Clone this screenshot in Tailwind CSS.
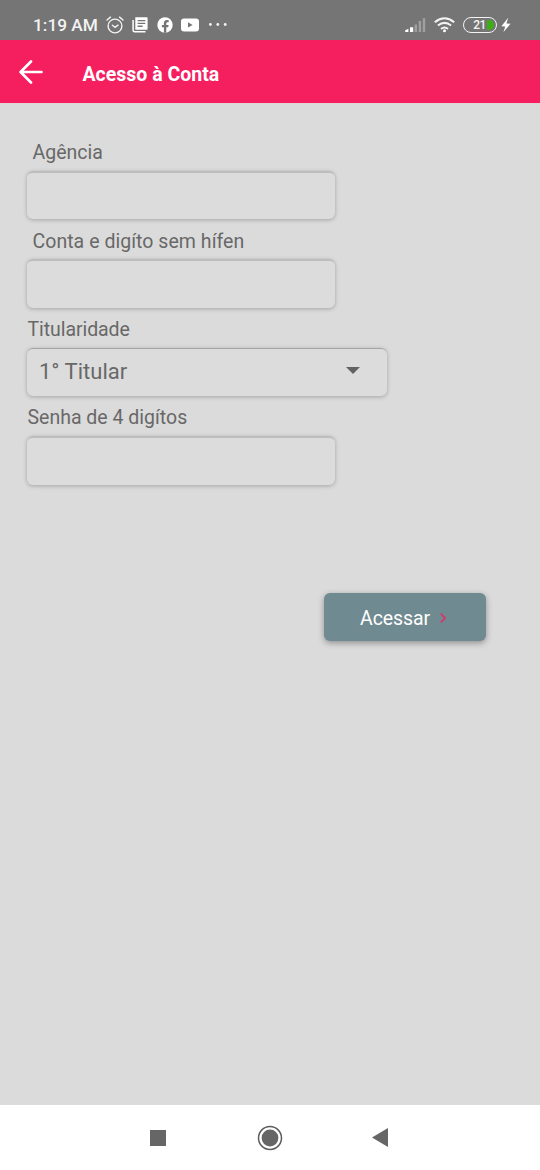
<!DOCTYPE html>
<html lang="pt-BR">
<head>
<meta charset="utf-8">
<meta name="viewport" content="width=device-width, initial-scale=1">
<title>Acesso à Conta</title>
<script src="https://cdn.jsdelivr.net/npm/@tailwindcss/browser@4"></script>
</head>
<body class="w-[540px] h-[1170px] overflow-hidden flex flex-col bg-[#dbdbdb] font-['Roboto',sans-serif] text-[#686868]">
  <div class="h-10 shrink-0 bg-[#757575] flex items-center pl-[33px] pr-[29px] pt-[9px] text-[#f3f3f3]">
    <span class="w-[73px] pt-px text-[17.3px] leading-[31px] font-medium whitespace-nowrap">1:19 AM</span>
    <svg class="w-[18px] h-[18px]" viewBox="0 0 18 18" fill="none" stroke="currentColor" stroke-width="1.4" stroke-linecap="round"><circle cx="9" cy="10" r="6.9"/><path d="M1 4 4.4 1.1M17 4l-3.4-2.9M6.4 9.3 9 11.3l3-2.2"/></svg>
    <svg class="w-4 h-4 ml-2" viewBox="0 0 16 16"><path fill="#fff" fill-rule="evenodd" d="M3.3.2H14.6q1 0 1 1V11.700q0 1-1 1H3.300zM5.600 3v1.300h7.700V3zM5.600 5.800v1.300h7.700V5.800zM5.600 8.600v1.300h5V8.600z"/><path d="M1.100 3v10.200q0 1.600 1.600 1.600H13.500" fill="none" stroke="#fff" stroke-width="1.500"/></svg>
    <svg class="w-4 h-4 ml-[9px]" viewBox="0 0 16 16"><circle cx="8" cy="8" r="7.700" fill="#fff"/><path fill="#757575" d="M6.900 15.800V10.200H4.900V7.900h2V6.200c0-2 1.200-3.100 3-3.100.9 0 1.800.2 1.800.2v1.900h-1c-1 0-1.400.6-1.400 1.300v1.400h2.300l-.4 2.300H9.300v5.600z"/></svg>
    <svg class="w-[18px] h-[14px] ml-2" viewBox="0 0 18 14"><rect y=".5" width="18" height="13" rx="3" fill="#fff"/><path d="M7 4.300v5.200L11.600 7z" fill="#757575"/></svg>
    <svg class="w-[18px] h-4 ml-[10px]" viewBox="0 0 18 16" fill="currentColor"><circle cx="1.400" cy="7.500" r="1.400"/><circle cx="8.800" cy="7.500" r="1.400"/><circle cx="16.200" cy="7.500" r="1.400"/></svg>
    <svg class="w-[21px] h-4 ml-auto" viewBox="0 0 21 16"><path fill="#fff" d="M.2 13.200 3.400 11.800V15H.2zM5 10.200h3.200V15H5z"/><path fill="#a0a0a0" d="M9.600 7.400h2.400V15H9.600zM13.700 4h2.400v11h-2.400zM17.800 1.300h2.400V15h-2.400z"/></svg>
    <svg class="w-[21px] h-4 ml-2" viewBox="0 0 21 16" fill="none" stroke="#f3f3f3" stroke-width="2"><path d="M.8 5.200Q10.500-2.700 20.200 5.200M3.900 8.600Q10.500 3.200 17.100 8.600M7 11.900q3.500-2.800 7 0"/><circle cx="10.500" cy="13.700" r="1.500" fill="#fff" stroke="none"/></svg>
    <div class="w-[34px] h-4 ml-2 rounded-full border-[1.900px] border-[#f3f3f3] flex items-center justify-end overflow-hidden pr-[2px]">
      <span class="text-[12px] leading-none font-medium tracking-[-0.4px] mr-[1px]">21</span>
      <span class="shrink-0 w-[7px] h-[10px] rounded-r-full bg-[#3cae16]"></span>
    </div>
    <svg class="w-[10px] h-4 ml-1" viewBox="0 0 10 16"><path fill="#fff" d="M7.200.8.400 9.200l3.800.2-1.700 5.700 7-8.300-4-.3z"/></svg>
  </div>
  <header class="h-[63px] shrink-0 bg-[#f51e5f] flex items-center pl-[19px] text-white">
    <svg class="w-6 h-6" viewBox="0 0 24 24" fill="none" stroke="currentColor" stroke-width="2.700" stroke-linecap="round" stroke-linejoin="round"><path d="M22.500 12H1.800M12 1.500 1.600 12 12 22.500"/></svg>
    <h1 class="ml-[39.500px] mt-[7px] text-[19.500px] leading-6 font-bold whitespace-nowrap">Acesso à Conta</h1>
  </header>
  <main class="grow flex flex-col pl-[27px] pr-[54px] pt-[26.900px] text-[19.500px] border-t border-t-[#e2d3d7]">
    <div class="h-[88.400px]">
      <label class="block h-[40px] pt-[10px] pl-[5.500px] leading-6 whitespace-nowrap">Agência</label>
      <div class="w-[308px] h-[48.500px] rounded-[6px] border-t-2 border-t-[#bdbdbd] shadow-[0_1px_4px_rgba(0,0,0,0.25)] bg-[#dcdcdc]"></div>
    </div>
    <div class="h-[88.400px]">
      <label class="block h-[40px] pt-[10.600px] pl-[5.500px] leading-6 tracking-[0.04px] whitespace-nowrap">Conta e digíto sem hífen</label>
      <div class="w-[308px] h-[48.500px] rounded-[6px] border-t-2 border-t-[#bdbdbd] shadow-[0_1px_4px_rgba(0,0,0,0.25)] bg-[#dcdcdc]"></div>
    </div>
    <div class="h-[88.400px]">
      <label class="block h-[40.300px] pt-[10.300px] pl-[0.500px] leading-6 tracking-[-0.07px] whitespace-nowrap">Titularidade</label>
      <div class="w-[359.500px] h-12 rounded-[6px] border-t border-t-[#a5a5a5] shadow-[0_1px_4px_rgba(0,0,0,0.25)] bg-[#dcdcdc] flex items-center justify-between pl-3 pr-[27px] pb-[3px]">
        <span class="text-[22px] leading-7 pt-[2px]">1° Titular</span>
        <svg class="w-[14px] h-[7px]" viewBox="0 0 14 7" fill="#626262"><path d="M0 0h14L7 7z"/></svg>
      </div>
    </div>
    <div class="h-[88.400px]">
      <label class="block h-[40.300px] pt-[10px] pl-[0.500px] leading-6 whitespace-nowrap">Senha de 4 digítos</label>
      <div class="w-[308px] h-[48.500px] rounded-[6px] border-t-2 border-t-[#bdbdbd] shadow-[0_1px_4px_rgba(0,0,0,0.25)] bg-[#dcdcdc]"></div>
    </div>
    <button class="self-end mt-[108.600px] w-[162px] h-12 rounded-[6px] bg-[#708a91] shadow-[0_2px_6px_rgba(0,0,0,0.35)] flex items-center pl-9 pt-[2px] text-white">
      <span class="w-[70px] pt-px leading-6 tracking-[-0.1px]">Acessar</span>
      <svg class="w-[6px] h-[10px] ml-[9.500px]" viewBox="0 0 6 10" fill="none" stroke="#d93468" stroke-width="1.700"><path d="M.8.700 5 5 .8 9.300"/></svg>
    </button>
  </main>
  <nav class="h-[65px] shrink-0 bg-white flex items-center pl-[150px]">
    <div class="w-4 h-4 bg-[#666]"></div>
    <svg class="w-[26px] h-[26px] ml-[91px]" viewBox="0 0 26 26"><circle cx="13" cy="13" r="11.500" fill="none" stroke="#5c5c5c" stroke-width="1.500"/><circle cx="13" cy="13" r="8.400" fill="#666"/></svg>
    <svg class="w-4 h-[19px] ml-[89px]" viewBox="0 0 16 19" fill="#666"><path d="M16 0v19L0 9.500z"/></svg>
  </nav>
</body>
</html>
